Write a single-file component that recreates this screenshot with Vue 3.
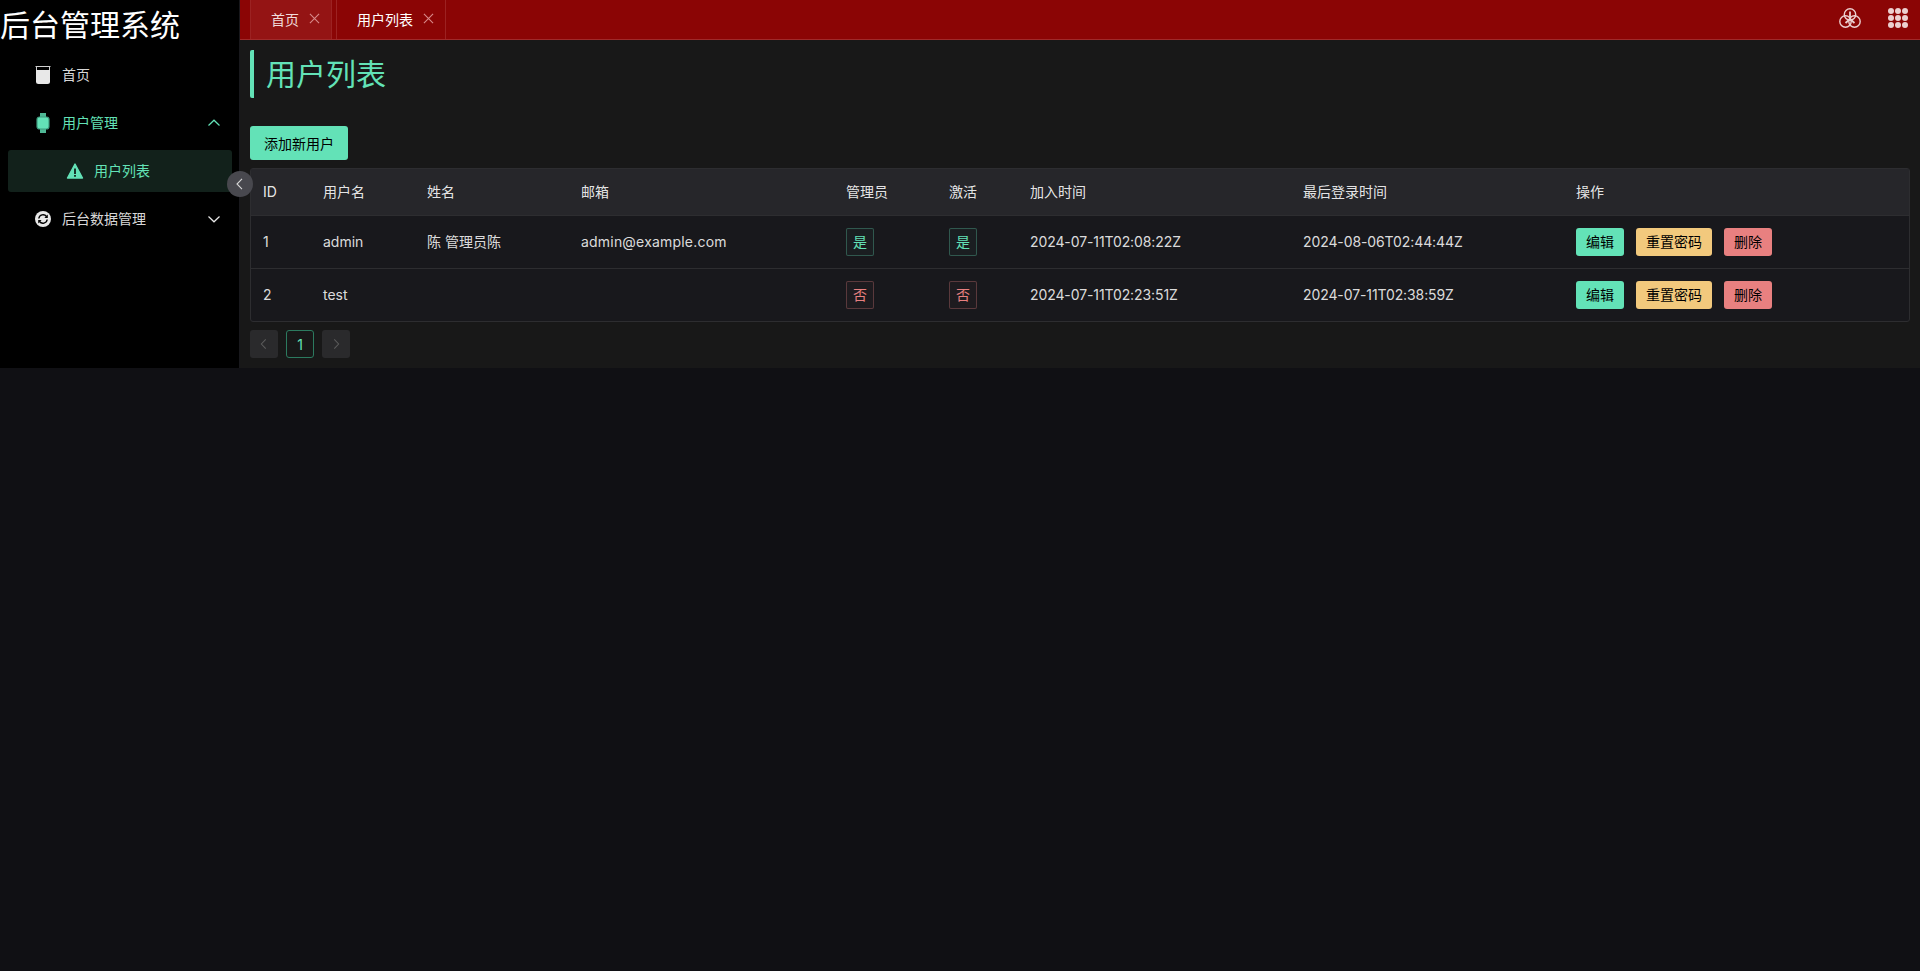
<script setup>
const rows = [
  { id: 1, username: 'admin', name: '陈 管理员陈', email: 'admin@example.com', admin: true, active: true, joined: '2024-07-11T02:08:22Z', last: '2024-08-06T02:44:44Z' },
  { id: 2, username: 'test', name: '', email: '', admin: false, active: false, joined: '2024-07-11T02:23:51Z', last: '2024-07-11T02:38:59Z' }
]
const heads = ['ID', '用户名', '姓名', '邮箱', '管理员', '激活', '加入时间', '最后登录时间', '操作']
</script>

<template>
  <div class="layout">
    <aside class="sider">
      <div class="logo">后台管理系统</div>
      <nav class="menu">
        <div class="item">
          <svg class="ic" viewBox="0 0 20 20"><path d="M2.500 1.500h15M3.500 1.500V16.500" fill="none" stroke="#cfcfcf" stroke-width="1"/><path d="M16.500 1.500V16.500" fill="none" stroke="#cfcfcf" stroke-width="1"/><path d="M3 5h14v11.500a2.500 2.500 0 0 1-2.500 2.500h-9A2.500 2.500 0 0 1 3 16.500z" fill="#e8e8e8"/></svg>
          <span>首页</span>
        </div>
        <div class="item on">
          <svg class="ic" viewBox="0 0 20 20"><path d="M7 0h6v4.500H7zM7 15.500h6V20H7z" fill="#4fb895"/><rect x="4" y="4" width="12" height="12" rx="2.500" fill="#63e2b7" stroke="#3f9b7f" stroke-width="1.200"/></svg>
          <span>用户管理</span>
          <svg class="arrow" viewBox="0 0 16 16"><path d="M2.500 10.500 8 5.200l5.500 5.300" fill="none" stroke="#63e2b7" stroke-width="1.200"/></svg>
        </div>
        <div class="item sub">
          <svg class="ic" viewBox="0 0 20 20"><path d="M10 3 17.500 17h-15z" fill="#63e2b7" stroke="#63e2b7" stroke-width="1.400" stroke-linejoin="round"/><path d="M9.100 7.500h1.800v5.500H9.100zM9.100 14h1.800v1.800H9.100z" fill="#12211b"/></svg>
          <span>用户列表</span>
        </div>
        <div class="item">
          <svg class="ic" viewBox="0 0 20 20"><circle cx="10" cy="10" r="8" fill="#e8e8e8"/><path d="M5.800 9.500A4.300 4.300 0 0 1 13.500 7.500M14.200 10.500A4.300 4.300 0 0 1 6.500 12.500" fill="none" stroke="#000" stroke-width="1.400"/><path d="M14.800 5.500v3.400h-3.400zM5.200 14.500v-3.400h3.400z" fill="#000"/></svg>
          <span>后台数据管理</span>
          <svg class="arrow" viewBox="0 0 16 16"><path d="M2.500 5.500 8 10.800l5.500-5.300" fill="none" stroke="#e8e8e8" stroke-width="1.200"/></svg>
        </div>
      </nav>
      <button class="toggle" aria-label="收起">
        <svg viewBox="0 0 16 16" width="16" height="16"><path d="M10 2.800 5 8l5 5.200" fill="none" stroke="#d8d8d8" stroke-width="1.100"/></svg>
      </button>
    </aside>

    <div class="right">
      <header class="head">
        <div class="tabs">
          <div class="tab">
            <span class="dim">首页</span>
            <svg class="x" viewBox="0 0 12 12"><path d="M1 1l10 10M11 1 1 11" stroke="#d88a8a" stroke-width="1.200"/></svg>
          </div>
          <div class="tab cur">
            <span>用户列表</span>
            <svg class="x" viewBox="0 0 12 12"><path d="M1 1l10 10M11 1 1 11" stroke="#d88a8a" stroke-width="1.200"/></svg>
          </div>
        </div>
        <div class="tools">
          <svg class="tool" viewBox="0 0 22 20" fill="none" stroke="#ecd0d0" stroke-width="1.400"><circle cx="11" cy="6.500" r="5.700"/><circle cx="6.500" cy="13.500" r="5.700"/><circle cx="15.500" cy="13.500" r="5.700"/><path d="M11 3.500v7.500M11 11l-4.500 4M11 11l4.500 4" stroke-width="1.800"/></svg>
          <div class="dots"><i v-for="n in 9" :key="n"></i></div>
        </div>
      </header>

      <main class="main">
        <h1 class="title">用户列表</h1>
        <button class="btn add">添加新用户</button>
        <table class="table">
          <colgroup>
            <col class="c1"><col class="c2"><col class="c3"><col class="c4"><col class="c5"><col class="c6"><col class="c7"><col class="c8"><col>
          </colgroup>
          <thead>
            <tr><th v-for="h in heads" :key="h">{{ h }}</th></tr>
          </thead>
          <tbody>
            <tr v-for="r in rows" :key="r.id">
              <td>{{ r.id }}</td>
              <td>{{ r.username }}</td>
              <td>{{ r.name }}</td>
              <td class="email">{{ r.email }}</td>
              <td><span class="tag" :class="r.admin ? 'yes' : 'no'">{{ r.admin ? '是' : '否' }}</span></td>
              <td><span class="tag" :class="r.active ? 'yes' : 'no'">{{ r.active ? '是' : '否' }}</span></td>
              <td class="time">{{ r.joined }}</td>
              <td class="time">{{ r.last }}</td>
              <td>
                <div class="ops">
                  <button class="btn sm green">编辑</button>
                  <button class="btn sm amber">重置密码</button>
                  <button class="btn sm red">删除</button>
                </div>
              </td>
            </tr>
          </tbody>
        </table>
        <div class="pager">
          <span class="pg off"><svg viewBox="0 0 16 16" width="14" height="14"><path d="M10 2.800 5 8l5 5.200" fill="none" stroke="#5c5c5c" stroke-width="1.200"/></svg></span>
          <span class="pg cur">1</span>
          <span class="pg off"><svg viewBox="0 0 16 16" width="14" height="14"><path d="M6 2.800 11 8l-5 5.200" fill="none" stroke="#5c5c5c" stroke-width="1.200"/></svg></span>
        </div>
      </main>
    </div>
  </div>
</template>

<style>
html, body { margin: 0; background: #101014; }
</style>

<style scoped>
.layout {
  display: flex;
  height: 368px;
  font-family: "Inter", "Noto Sans CJK SC", sans-serif;
  font-size: 14px;
  color: rgba(255, 255, 255, 0.86);
}
.sider {
  position: relative;
  flex: 0 0 239px;
  background: #000;
  border-right: 1px solid #18181c;
}
.logo {
  height: 50px;
  line-height: 50px;
  margin-bottom: 4px;
  font-size: 30px;
  color: #fff;
  white-space: nowrap;
}
.menu { display: flex; flex-direction: column; gap: 6px; }
.item {
  display: flex;
  align-items: center;
  height: 42px;
  padding: 0 17px 0 33px;
}
.item span { margin-left: 9px; flex: 1; padding-bottom: 2px; }
.item.on { color: #63e2b7; }
.item.sub {
  margin: 0 7px 0 8px;
  padding-left: 57px;
  background: #12211b;
  border-radius: 3px;
  color: #63e2b7;
}
.ic { width: 20px; height: 20px; flex: none; }
.arrow { width: 16px; height: 16px; flex: none; }
.toggle {
  position: absolute;
  top: 171px;
  right: -14px;
  width: 26px;
  height: 26px;
  padding: 0;
  border: 0;
  border-radius: 50%;
  background: #48484e;
  display: flex;
  align-items: center;
  justify-content: center;
  z-index: 2;
}
.right { flex: 1; min-width: 0; display: flex; flex-direction: column; background: #181818; }
.head {
  height: 40px;
  box-sizing: border-box;
  background: #8b0505;
  border-bottom: 1px solid #a02a2a;
  display: flex;
  justify-content: space-between;
  padding-left: 10px;
}
.tabs { display: flex; gap: 4px; }
.tab {
  display: flex;
  align-items: center;
  gap: 10px;
  padding: 0 11px 2px 20px;
  border-left: 1px solid #9c2222;
  border-right: 1px solid #9c2222;
  color: #fff;
}
.tab:first-child { background: #941414; }
.dim { color: #f0dcdc; }
.x { width: 11px; height: 11px; }
.tools { display: flex; align-items: center; gap: 27px; padding: 0 12px 3px 0; }
.tool { width: 22px; height: 20px; }
.dots { display: grid; grid-template-columns: repeat(3, 6px); gap: 1px; }
.dots i { width: 6px; height: 6px; border-radius: 50%; background: #ecd0d0; }
.main { padding: 10px 10px 0; display: flex; flex-direction: column; align-items: flex-start; }
.title {
  margin: 0 0 28px;
  height: 48px;
  line-height: 48px;
  padding-left: 12px;
  border-left: 4px solid #63e2b7;
  border-radius: 2px;
  font-size: 30px;
  font-weight: 400;
  color: #63e2b7;
}
.btn {
  border: 0;
  border-radius: 3px;
  color: #000;
  font: inherit;
  padding: 0;
  display: inline-flex;
  align-items: center;
  justify-content: center;
}
.add { height: 34px; width: 98px; background: #63e2b7; margin-bottom: 8px; }
.table {
  width: 100%;
  table-layout: fixed;
  border-collapse: separate;
  border-spacing: 0;
  border: 1px solid #2d2d30;
  border-radius: 3px;
  background: #18181c;
}
.c1 { width: 60px; }
.c2 { width: 104px; }
.c3 { width: 154px; }
.c4 { width: 265px; }
.c5 { width: 103px; }
.c6 { width: 81px; }
.c7 { width: 273px; }
.c8 { width: 273px; }
th, td { box-sizing: border-box; padding: 0 12px; text-align: left; font-weight: 400; line-height: 20px; }
th {
  height: 47px;
  background: #26262a;
  color: rgba(255, 255, 255, 0.9);
  border-bottom: 1px solid #2d2d30;
}
td { height: 53px; border-bottom: 1px solid #2d2d30; }
tbody tr:last-child td { height: 52px; border-bottom: 0; }
.email { letter-spacing: 0.2px; }
.time { letter-spacing: -0.1px; }
.tag {
  display: inline-flex;
  align-items: center;
  justify-content: center;
  box-sizing: border-box;
  width: 28px;
  height: 28px;
  border-radius: 2px;
  vertical-align: middle;
}
.yes { color: #63e2b7; border: 1px solid rgba(99, 226, 183, 0.3); background: rgba(99, 226, 183, 0.03); }
.no { color: #e88080; border: 1px solid rgba(232, 128, 128, 0.3); background: rgba(232, 128, 128, 0.03); }
.ops { display: flex; gap: 12px; }
.sm { height: 28px; padding: 0 10px; }
.green { background: #63e2b7; }
.amber { background: #f2c97d; }
.red { background: #e88080; }
.pager { display: flex; gap: 8px; margin-top: 8px; }
.pg {
  box-sizing: border-box;
  width: 28px;
  height: 28px;
  border-radius: 3px;
  display: flex;
  align-items: center;
  justify-content: center;
}
.off { background: #2a2a2c; }
.pg.cur { border: 1px solid #2c7a5f; color: #63e2b7; }
</style>
